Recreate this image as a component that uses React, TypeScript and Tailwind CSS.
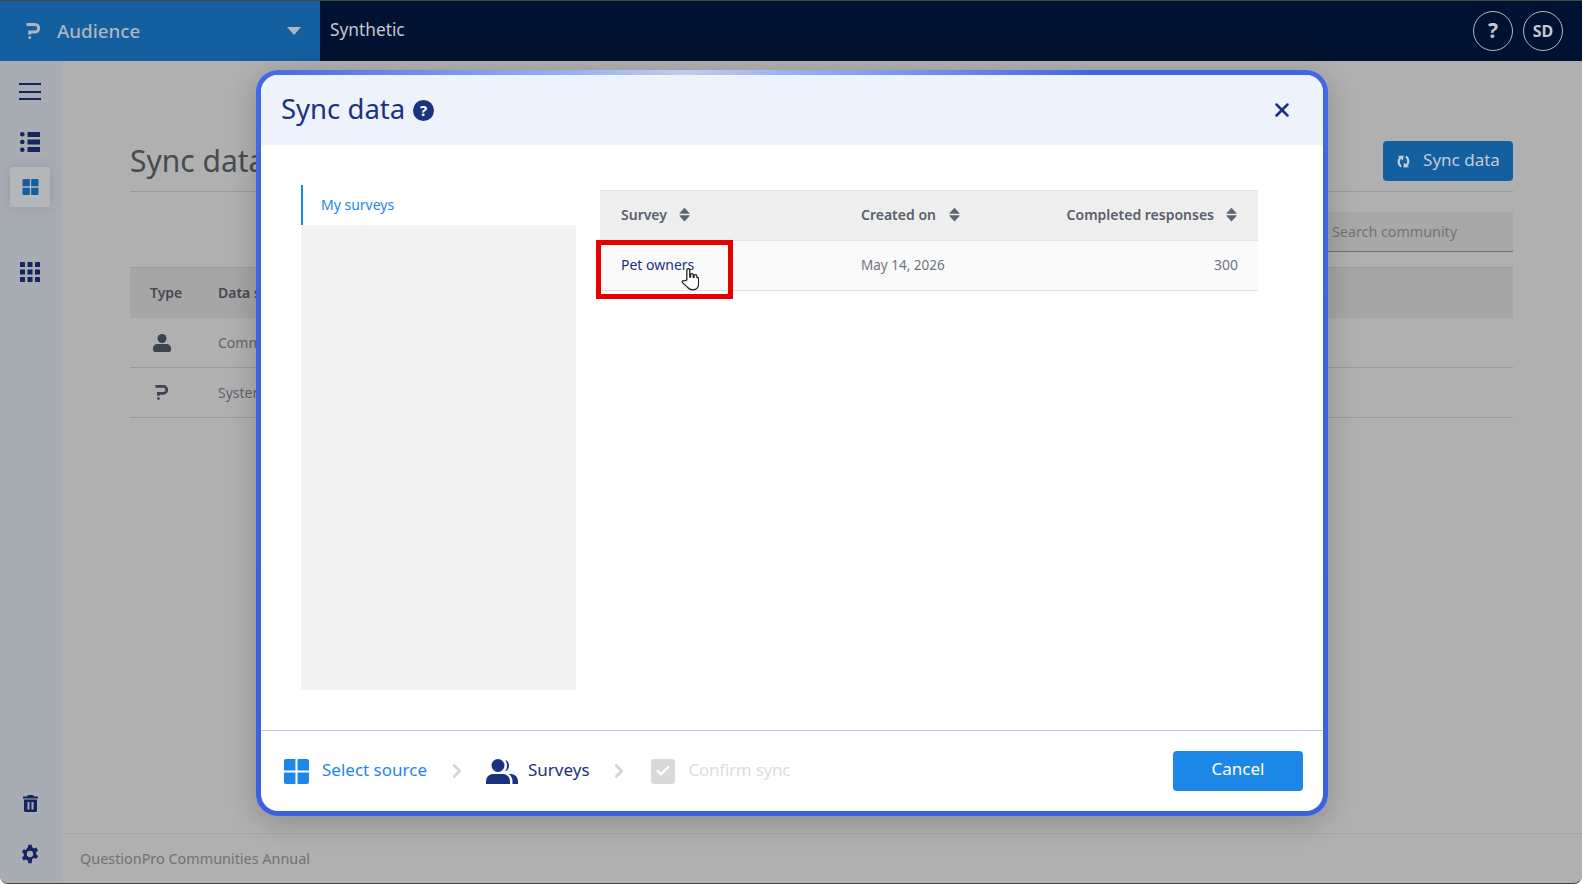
import { X, ChevronRight, Check } from "lucide-react";

const font = "font-['Noto_Sans',sans-serif]";

const LogoP = ({ className }: { className: string }) => (
  <svg viewBox="0 0 14 16" className={className} fill="none">
    <path d="M0.5 1.500h8.500a3.700 3.700 0 0 1 0 7.400H3.700V11.500" stroke="currentColor" strokeWidth="3" />
    <circle cx="3.700" cy="14.500" r="1.500" fill="currentColor" />
  </svg>
);

const SortIcon = () => (
  <svg viewBox="0 0 12 16" className="w-[11px] h-[15px] text-[#5a6472]" fill="currentColor">
    <path d="M6 0.5 11.5 6.5a.5.5 0 0 1-.4.8H.9a.5.5 0 0 1-.4-.8z" />
    <path d="M6 15.5.5 9.5a.5.5 0 0 1 .4-.8h10.200a.5.5 0 0 1 .4.8z" />
  </svg>
);

const WindowGrid = ({ className }: { className: string }) => (
  <svg viewBox="0 0 24 24" className={className} fill="currentColor">
    <path d="M2 0h9v11H0V2a2 2 0 0 1 2-2z" />
    <path d="M13 0h9a2 2 0 0 1 2 2v9H13z" />
    <path d="M0 13h11v11H2a2 2 0 0 1-2-2z" />
    <path d="M13 13h11v9a2 2 0 0 1-2 2h-9z" />
  </svg>
);

const Sidebar = () => (
  <aside className="w-[62px] pr-[2px] bg-[#a8acb3] flex flex-col items-center text-[#14265e] relative">
    <div className="mt-[22px] w-[22px] flex flex-col gap-[5.5px]">
      <div className="h-[2px] bg-[#14265e]" />
      <div className="h-[2px] bg-[#14265e]" />
      <div className="h-[2px] bg-[#14265e]" />
    </div>
    <svg viewBox="0 0 20 20" className="w-[20px] h-[20px] mt-[32px]" fill="currentColor">
      <circle cx="2.300" cy="2.300" r="2.300" />
      <rect x="7.500" y="0" width="12.500" height="5" />
      <circle cx="2.300" cy="10" r="2.300" />
      <rect x="7.500" y="7.500" width="12.500" height="5" />
      <circle cx="2.300" cy="17.700" r="2.300" />
      <rect x="7.500" y="15" width="12.500" height="5" />
    </svg>
    <div className="mt-[15px] w-[40px] h-[40px] rounded-[3px] bg-[#b4b6ba] flex items-center justify-center shadow-[0_0_12px_rgba(120,130,160,0.4)]">
      <WindowGrid className="w-[17px] h-[16px] text-[#145f9f]" />
    </div>
    <svg viewBox="0 0 20 20" className="w-[20px] h-[20px] mt-[55px]" fill="currentColor">
      {[0, 7.5, 15].flatMap((y) =>
        [0, 7.5, 15].map((x) => <rect key={`${x}-${y}`} x={x} y={y} width="5" height="5" rx="0.5" />)
      )}
    </svg>
    <div className="flex-1" />
    <svg viewBox="0 0 15 17" className="w-[15px] h-[17px] mb-[32px]" fill="currentColor">
      <path d="M5 0h5l1 1.500h4v2H0v-2h4z" />
      <path fillRule="evenodd" d="M1 4.500h13V15.500a1.500 1.500 0 0 1-1.500 1.500h-10A1.500 1.500 0 0 1 1 15.500zM4.500 7v7.500h2V7zM8.500 7v7.500h2V7z" />
    </svg>
    <svg viewBox="0 0 24 24" className="w-[20px] h-[20px] mb-[19px]" fill="currentColor">
      <path fillRule="evenodd" d="M10 1h4l.6 3a8.500 8.500 0 0 1 2.200 1.300l2.900-1 2 3.400-2.300 2a8.500 8.500 0 0 1 0 2.600l2.300 2-2 3.400-2.900-1a8.500 8.500 0 0 1-2.200 1.300L14 23h-4l-.6-3a8.500 8.500 0 0 1-2.200-1.300l-2.900 1-2-3.400 2.300-2a8.500 8.500 0 0 1 0-2.600l-2.300-2 2-3.400 2.900 1A8.500 8.500 0 0 1 9.400 4zM12 8.200a3.800 3.800 0 1 0 0 7.600 3.800 3.800 0 0 0 0-7.600z" />
    </svg>
  </aside>
);

const Page = () => (
  <main className="flex-1 flex flex-col min-w-0 text-[#454a52]">
    <div className="flex-1 pl-[68px] pr-[69px]">
      <div className="flex items-end justify-between h-[131px] pb-[10px] border-b border-[#989898]">
        <h1 className="text-[30px] leading-[40px] text-[#484b50]">Sync data</h1>
        <button className="w-[130px] h-[40px] rounded-[4px] bg-[#145f9f] text-[#c4ccd6] text-[17px] pb-[2px] flex items-center justify-center gap-[12px]">
          <svg viewBox="0 0 16 16" className="w-[15px] h-[15px] mt-[2px]" fill="currentColor">
            <path d="M5.500 13.500C2 11 2 6 5 3.500" fill="none" stroke="currentColor" strokeWidth="2.400" />
            <path d="M2 2 8 1.500 7.500 7z" />
            <path d="M10.500 2.500C14 5 14 10 11 12.500" fill="none" stroke="currentColor" strokeWidth="2.400" />
            <path d="M14 14 8 14.500 8.500 9z" />
          </svg>
          Sync data
        </button>
      </div>
      <div className="flex justify-end mt-[20px]">
        <div className="w-[205px] h-[40px] bg-[#a8a8a8] border-b border-[#707070] flex items-center pl-[24px] text-[14.3px] text-[#737373]">
          Search community
        </div>
      </div>
      <div className="mt-[15px] h-[51px] bg-[#a6a6a6] border-t border-[#9a9a9a] flex items-center pb-[2px] text-[14px] font-semibold">
        <span className="w-[88px] pl-[20px]">Type</span>
        <span>Data source</span>
      </div>
      <div className="h-[50px] border-b border-[#999999] flex items-center text-[14px] text-[#5f646b]">
        <span className="w-[88px] pl-[23px]">
          <svg viewBox="0 0 18 18" className="w-[18px] h-[18px] text-[#3c4450]" fill="currentColor">
            <circle cx="9" cy="4.500" r="4.500" />
            <path d="M4.500 10h9a4.500 4 0 0 1 4.500 4v2a2 2 0 0 1-2 2H2a2 2 0 0 1-2-2v-2a4.500 4 0 0 1 4.500-4z" />
          </svg>
        </span>
        <span>Community</span>
      </div>
      <div className="h-[50px] border-b border-[#999999] flex items-center text-[14px] text-[#5f646b]">
        <span className="w-[88px] pl-[25px]">
          <LogoP className="w-[13px] h-[15px] text-[#3c4450]" />
        </span>
        <span>System</span>
      </div>
    </div>
    <footer className="h-[50px] ml-[-2px] border-t border-[#a6a6a6] flex items-center pl-[20px] text-[14.4px] text-[#727272]">
      QuestionPro Communities Annual
    </footer>
  </main>
);

const Modal = () => (
  <div className="absolute left-[256px] top-[70px] w-[1072px] h-[746px] rounded-[22px] p-[5px] bg-no-repeat bg-[linear-gradient(90deg,#4168e6_0%,#bdcbf0_40%,#3f66e8_78%),linear-gradient(#4168e6,#3a5fe0)] [background-size:100%_5px,100%_100%] shadow-[0_6px_30px_rgba(0,0,0,0.2)]">
    <div className="h-full rounded-[17px] bg-white flex flex-col overflow-hidden">
      <div className="h-[70px] shrink-0 bg-[#edf2fb] flex items-center justify-between pl-[20px] pr-[30px] text-[#1b3280]">
        <div className="flex items-center gap-[8px]">
          <h2 className="text-[27.5px] pb-[2px]">Sync data</h2>
          <span className="w-[21px] h-[21px] rounded-full bg-[#1b3280] text-white text-[15px] font-bold flex items-center justify-center">?</span>
        </div>
        <X className="w-[22px] h-[22px]" strokeWidth={2.8} />
      </div>

      <div className="flex-1 flex pl-[40px] pt-[40px] pr-[65px] min-h-0">
        <div className="w-[275px] h-[505px] flex flex-col shrink-0">
          <div className="h-[40px] border-l-2 border-[#1d87e8] flex items-center pl-[18px] pb-[2px] text-[14px] text-[#1d87e8]">
            My surveys
          </div>
          <div className="flex-1 bg-[#f2f2f2]" />
        </div>
        <div className="ml-[24px] flex-1">
          <div className="mt-[5px] h-[51px] bg-[#eeeeee] border-t border-b border-[#e2e2e2] flex items-center pb-[2px] text-[14px] font-semibold text-[#59606b]">
            <div className="w-[261px] pl-[21px] flex items-center gap-[12px]">Survey <SortIcon /></div>
            <div className="flex-1 flex items-center gap-[13px]">Created on <SortIcon /></div>
            <div className="pr-[21px] flex items-center gap-[12px]">Completed responses <SortIcon /></div>
          </div>
          <div className="relative h-[50px] bg-[#fafafa] border-b border-[#e2e2e2] flex items-center pb-[2px] text-[14px]">
            <div className="w-[261px] pl-[21px] text-[#1b3280]">Pet owners</div>
            <div className="flex-1 pt-[2px] text-[13.5px] text-[#6e7480]">May 14, 2026</div>
            <div className="pr-[20px] text-[#6e7480]">300</div>
            <div className="absolute left-[-4px] top-[-1px] w-[137px] h-[59px] border-[5px] border-[#e60000]" />
            <svg viewBox="0 0 20 26" className="absolute left-[81px] top-[26px] w-[18px] h-[24px]" fill="#ffffff" stroke="#222222" strokeWidth="1.4" strokeLinejoin="round">
              <path d="M6.500 14V3a1.600 1.600 0 0 1 3.200 0v8l1-.2V8.600a1.500 1.500 0 0 1 3 0v2.600l.9.1V9.600a1.500 1.500 0 0 1 3 0v1.800a1.400 1.400 0 0 1 2 1.200V18c0 4-2.400 7-6.500 7-3 0-4.600-1-6-3L1.600 17c-1-1.400.8-3 2.200-1.800z" />
            </svg>
          </div>
        </div>
      </div>

      <div className="h-[81px] shrink-0 border-t border-[#b4c6fb] flex items-center pl-[23px] pr-[20px]">
        <WindowGrid className="w-[25px] h-[25px] text-[#1d87e8]" />
        <span className="ml-[13px] pb-[2px] text-[17px] text-[#1d87e8]">Select source</span>
        <ChevronRight className="w-[22px] h-[22px] ml-[19px] text-[#d4d4d4]" strokeWidth={3} />
        <svg viewBox="0 0 32 25" className="w-[32px] h-[25px] ml-[18px] text-[#1b3280]" fill="currentColor">
          <circle cx="12" cy="6.500" r="6.500" />
          <path d="M7 15h10a7 7 0 0 1 7 7v3H0v-3a7 7 0 0 1 7-7z" />
          <path d="M19 .5a6.500 6.500 0 0 1 0 12c1.400-1.800 2-3.800 2-6s-.6-4.200-2-6z" />
          <path d="M22.500 15H25a7 7 0 0 1 7 7v3h-5.500v-3a9 9 0 0 0-4-7z" />
        </svg>
        <span className="ml-[10px] pb-[2px] text-[17px] text-[#1b3280]">Surveys</span>
        <ChevronRight className="w-[22px] h-[22px] ml-[18px] text-[#d4d4d4]" strokeWidth={3} />
        <div className="ml-[21px] w-[24px] h-[25px] rounded-[3px] bg-[#d9d9d9] flex items-center justify-center">
          <Check className="w-[16px] h-[16px] text-white" strokeWidth={3.5} />
        </div>
        <span className="ml-[14px] pb-[2px] text-[17px] tracking-[-0.25px] text-[#dddddd]">Confirm sync</span>
        <div className="flex-1" />
        <button className="w-[130px] h-[40px] rounded-[4px] bg-[#1d87e8] text-white text-[17px] pb-[4px]">Cancel</button>
      </div>
    </div>
  </div>
);

export default function App() {
  return (
    <div className={`relative w-[1582px] h-[884px] overflow-hidden bg-white ${font}`}>
      <div className="h-full flex flex-col bg-[#b0b0b0] border-t border-b border-[#444444] rounded-b-[8px] overflow-hidden">
        <header className="h-[60px] shrink-0 flex bg-[#001231]">
          <div className="w-[320px] bg-[#145f9f] flex items-center pl-[26px] pr-[19px] text-[#aeb6c2]">
            <LogoP className="w-[14px] h-[16px]" />
            <span className="ml-[17px] text-[18.800px] font-medium">Audience</span>
            <div className="flex-1" />
            <svg viewBox="0 0 14 8" className="w-[14px] h-[8px]" fill="currentColor">
              <path d="M0 0h14L7 8z" />
            </svg>
          </div>
          <div className="flex-1 flex items-center justify-between pl-[10px] pr-[19px] text-[#c4c8d0]">
            <span className="text-[17.300px] pb-[2px]">Synthetic</span>
            <div className="flex gap-[10px]">
              <div className="w-[40px] h-[40px] rounded-full border border-[#b4b8c0] flex items-center justify-center text-[21px] font-bold">?</div>
              <div className="w-[40px] h-[40px] rounded-full border border-[#b4b8c0] flex items-center justify-center text-[16px] font-bold">SD</div>
            </div>
          </div>
        </header>
        <div className="flex-1 flex min-h-0">
          <Sidebar />
          <Page />
        </div>
      </div>
      <Modal />
    </div>
  );
}
